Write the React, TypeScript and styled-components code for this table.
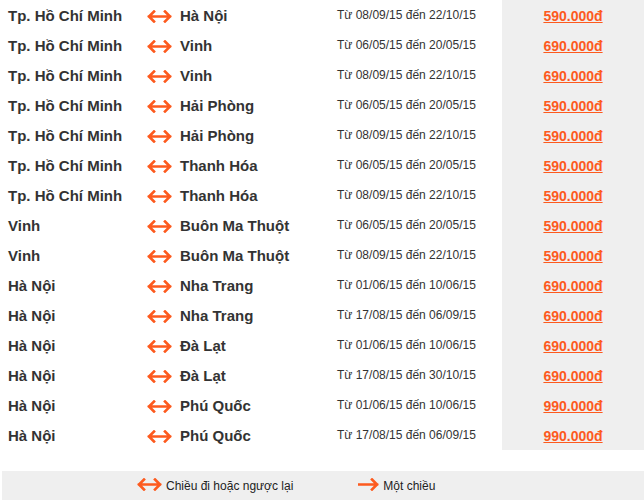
import React from "react";
import styled, { createGlobalStyle } from "styled-components";

const GlobalStyle = createGlobalStyle`
  body {
    margin: 0;
    background: #fff;
    font-family: "Liberation Sans", Arial, sans-serif;
    color: #333;
  }
`;

const ORANGE = "#fd5a1e";

interface Route {
  from: string;
  to: string;
  dates: string;
  price: string;
}

const routes: Route[] = [
  { from: "Tp. Hồ Chí Minh", to: "Hà Nội", dates: "Từ 08/09/15 đến 22/10/15", price: "590.000đ" },
  { from: "Tp. Hồ Chí Minh", to: "Vinh", dates: "Từ 06/05/15 đến 20/05/15", price: "690.000đ" },
  { from: "Tp. Hồ Chí Minh", to: "Vinh", dates: "Từ 08/09/15 đến 22/10/15", price: "690.000đ" },
  { from: "Tp. Hồ Chí Minh", to: "Hải Phòng", dates: "Từ 06/05/15 đến 20/05/15", price: "590.000đ" },
  { from: "Tp. Hồ Chí Minh", to: "Hải Phòng", dates: "Từ 08/09/15 đến 22/10/15", price: "590.000đ" },
  { from: "Tp. Hồ Chí Minh", to: "Thanh Hóa", dates: "Từ 06/05/15 đến 20/05/15", price: "590.000đ" },
  { from: "Tp. Hồ Chí Minh", to: "Thanh Hóa", dates: "Từ 08/09/15 đến 22/10/15", price: "590.000đ" },
  { from: "Vinh", to: "Buôn Ma Thuột", dates: "Từ 06/05/15 đến 20/05/15", price: "590.000đ" },
  { from: "Vinh", to: "Buôn Ma Thuột", dates: "Từ 08/09/15 đến 22/10/15", price: "590.000đ" },
  { from: "Hà Nội", to: "Nha Trang", dates: "Từ 01/06/15 đến 10/06/15", price: "690.000đ" },
  { from: "Hà Nội", to: "Nha Trang", dates: "Từ 17/08/15 đến 06/09/15", price: "690.000đ" },
  { from: "Hà Nội", to: "Đà Lạt", dates: "Từ 01/06/15 đến 10/06/15", price: "690.000đ" },
  { from: "Hà Nội", to: "Đà Lạt", dates: "Từ 17/08/15 đến 30/10/15", price: "690.000đ" },
  { from: "Hà Nội", to: "Phú Quốc", dates: "Từ 01/06/15 đến 10/06/15", price: "990.000đ" },
  { from: "Hà Nội", to: "Phú Quốc", dates: "Từ 17/08/15 đến 06/09/15", price: "990.000đ" },
];

function BothWays() {
  return (
    <svg width="25" height="13" viewBox="0 0 25 13" fill="none">
      <path
        d="M2 6.5H23M7 1.5L2 6.5L7 11.5M18 1.5L23 6.5L18 11.5"
        stroke={ORANGE}
        strokeWidth="2.6"
        strokeLinecap="square"
      />
    </svg>
  );
}

function OneWay() {
  return (
    <svg width="21" height="13" viewBox="0 0 21 13" fill="none">
      <path
        d="M1 6.5H19M14 1.5L19 6.5L14 11.5"
        stroke={ORANGE}
        strokeWidth="2.6"
        strokeLinecap="square"
      />
    </svg>
  );
}

export default function App() {
  return (
    <>
      <GlobalStyle />
      <Page>
        <Table>
          {routes.map((r, i) => (
            <Row key={i}>
              <City className="from">{r.from}</City>
              <ArrowCell>
                <BothWays />
              </ArrowCell>
              <City>{r.to}</City>
              <Dates>{r.dates}</Dates>
              <PriceCell>
                <Price href="#">{r.price}</Price>
              </PriceCell>
            </Row>
          ))}
        </Table>
        <Legend>
          <LegendItem>
            <BothWays />
            <span>Chiều đi hoặc ngược lại</span>
          </LegendItem>
          <LegendItem>
            <OneWay />
            <span>Một chiều</span>
          </LegendItem>
        </Legend>
      </Page>
    </>
  );
}

const Page = styled.div`
  width: 644px;
  height: 500px;
  overflow: hidden;
`;

const Table = styled.div`
  display: flex;
  flex-direction: column;
`;

const Row = styled.div`
  display: grid;
  grid-template-columns: 147px 33px 157px 165px 142px;
  height: 30px;
  align-items: center;

  .from {
    padding-left: 8px;
  }
`;

const City = styled.div`
  font-size: 15px;
  font-weight: 700;
  color: #333;
  white-space: nowrap;
`;

const ArrowCell = styled.div`
  display: flex;
  align-items: center;
  padding-top: 2px;
`;

const Dates = styled.div`
  font-size: 12px;
  color: #333;
  white-space: nowrap;
`;

const PriceCell = styled.div`
  height: 100%;
  background: #efefef;
  display: flex;
  align-items: center;
  justify-content: center;
  padding-top: 1px;
  box-sizing: border-box;
`;

const Price = styled.a`
  font-size: 14px;
  font-weight: 700;
  color: ${ORANGE};
  text-decoration: underline;
`;

const Legend = styled.div`
  margin: 21px 0 0 2px;
  height: 30px;
  background: #efefef;
  display: flex;
  align-items: center;
  gap: 65px;
  padding-left: 135px;
`;

const LegendItem = styled.div`
  display: flex;
  align-items: center;
  gap: 4px;
  font-size: 12px;
  color: #222;

  svg {
    margin-top: -3px;
  }
`;
